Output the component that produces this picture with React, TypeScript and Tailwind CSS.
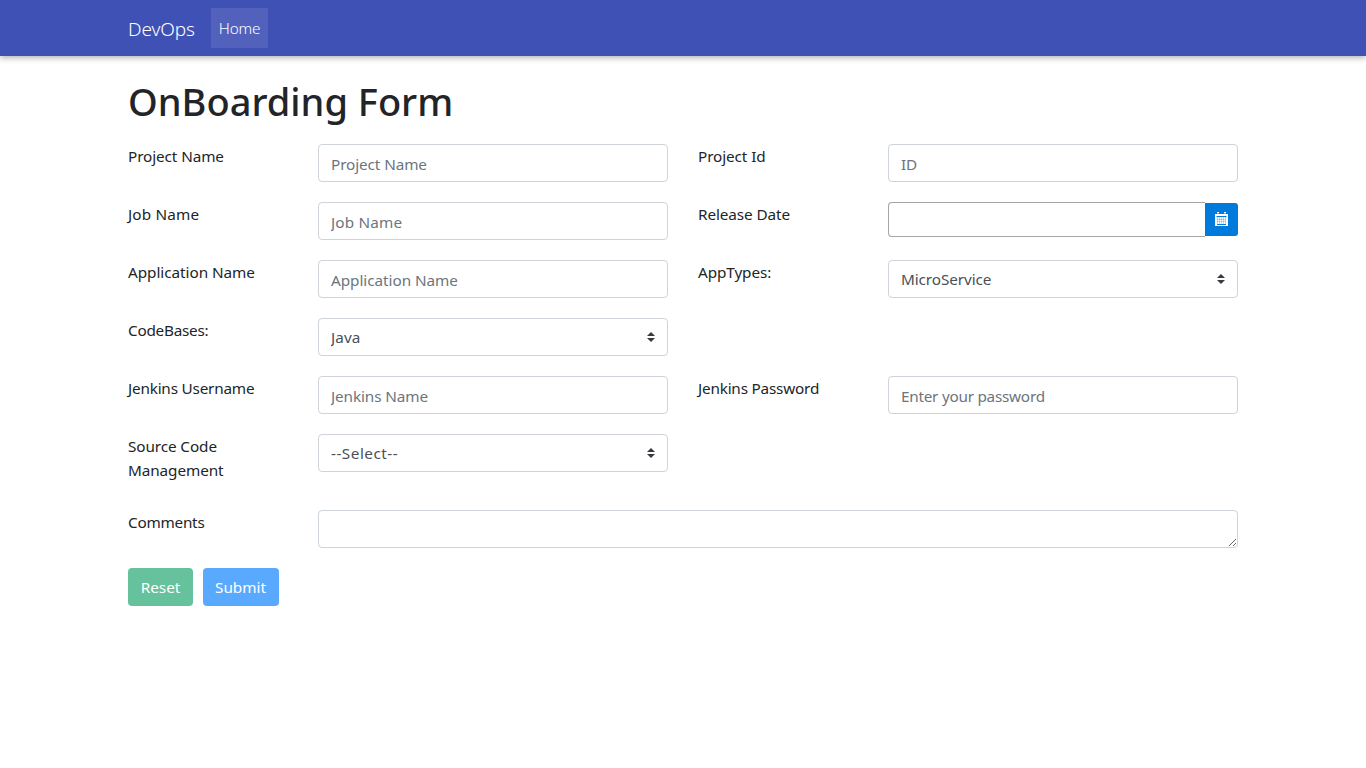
import type { ReactNode } from "react";

const control =
  "block h-[38px] w-full rounded border border-[#ced4da] bg-white px-3 text-[15.3px] text-[#495057] placeholder:text-[#6c757d] placeholder:opacity-100 outline-none";

function Row({ children, className = "" }: { children: ReactNode; className?: string }) {
  return (
    <div className={`mb-5 grid grid-cols-[160px_350px_160px_350px] items-start gap-x-[30px] ${className}`}>
      {children}
    </div>
  );
}

function Label({ children, className = "tracking-[-0.1px]" }: { children: ReactNode; className?: string }) {
  return <label className={`block text-[15.3px] leading-6 ${className}`}>{children}</label>;
}

function Input({ placeholder, type = "text", className = "tracking-[-0.1px]" }: { placeholder: string; type?: string; className?: string }) {
  return <input type={type} placeholder={placeholder} className={`${control} pt-px ${className}`} />;
}

function Select({ value, className = "tracking-[-0.1px]" }: { value: string; className?: string }) {
  return (
    <div className="relative">
      <select defaultValue={value} className={`${control} appearance-none ${className}`}>
        <option>{value}</option>
      </select>
      <svg viewBox="0 0 4 5" className="pointer-events-none absolute right-[13px] top-[14px] h-[10px] w-2" fill="#343a40">
        <path d="M2 0L0 2h4zm0 5L0 3h4z" />
      </svg>
    </div>
  );
}

function CalendarIcon() {
  return (
    <svg className="mb-0.5" width="13" height="14" viewBox="0 0 13 14" fill="none">
      <path fill="#fff" d="M0 2h2V0h2v2h5V0h2v2h2v12H0z" />
      <path stroke="#007bdc" strokeWidth="1" d="M1.5 4.5h10M2 12.5h9" />
      <path stroke="#007bdc" strokeOpacity=".6" strokeWidth="1" d="M2 1.5h2M9 1.5h2" />
      <path stroke="#007bdc" strokeOpacity=".28" strokeWidth="1" d="M2 7.5h9M2 9.5h9M2.5 5v7M4.5 5v7M6.5 5v7M8.5 5v7M10.5 5v7" />
    </svg>
  );
}

export default function App() {
  return (
    <div className="min-h-screen bg-white font-['Noto_Sans','Open_Sans',sans-serif] text-[#212529]">
      <nav className="h-14 bg-[#3f51b5] shadow-[0_2px_6px_rgba(0,0,0,0.3)]">
        <div className="mx-auto flex h-full w-[1110px] items-center gap-4 text-white">
          <a className="w-[67px] whitespace-nowrap pt-px text-[19px] font-light leading-[30px] tracking-[-0.1px]">DevOps</a>
          <a className="flex h-10 w-[57px] items-center justify-center bg-white/10 text-[15.3px] font-light tracking-[-0.2px]">Home</a>
        </div>
      </nav>
      <main className="mx-auto w-[1110px] pt-[21px]">
        <h1 className="mb-[19px] whitespace-nowrap text-[38px] font-medium leading-[48px]">OnBoarding Form</h1>
        <form>
          <Row>
            <Label>Project Name</Label>
            <Input placeholder="Project Name" />
            <Label>Project Id</Label>
            <Input placeholder="ID" />
          </Row>
          <Row>
            <Label className="tracking-[0.15px]">Job Name</Label>
            <Input placeholder="Job Name" className="tracking-[0.15px]" />
            <Label>Release Date</Label>
            <div className="flex h-[35px] items-center">
              <input className="h-[35px] w-[317px] rounded-l border border-r-0 border-[#a6a6a6] px-3 outline-none" />
              <button type="button" className="flex h-[33px] w-[33px] items-center justify-center rounded-r-[3px] bg-[#007bdc]">
                <CalendarIcon />
              </button>
            </div>
          </Row>
          <Row>
            <Label className="tracking-[-0.05px]">Application Name</Label>
            <Input placeholder="Application Name" className="tracking-[-0.05px]" />
            <Label>AppTypes:</Label>
            <Select value="MicroService" />
          </Row>
          <Row>
            <Label className="tracking-[-0.25px]">CodeBases:</Label>
            <Select value="Java" className="tracking-[0.1px]" />
          </Row>
          <Row>
            <Label className="tracking-[-0.2px]">Jenkins Username</Label>
            <Input placeholder="Jenkins Name" />
            <Label className="tracking-[-0.2px]">Jenkins Password</Label>
            <Input type="password" placeholder="Enter your password" className="tracking-[-0.25px]" />
          </Row>
          <Row className="h-14">
            <Label>Source Code Management</Label>
            <Select value="--Select--" className="tracking-[0.5px]" />
          </Row>
          <Row>
            <Label className="tracking-[-0.25px]">Comments</Label>
            <textarea rows={1} className={`${control} col-span-3 resize`} />
          </Row>
          <div className="flex gap-2.5 text-[15.3px] text-white">
            <button type="reset" className="h-[38px] w-[65px] rounded bg-[#65c29c]">Reset</button>
            <button type="button" className="h-[38px] w-[76px] rounded bg-[#59a9ff] pr-px">Submit</button>
          </div>
        </form>
      </main>
    </div>
  );
}
